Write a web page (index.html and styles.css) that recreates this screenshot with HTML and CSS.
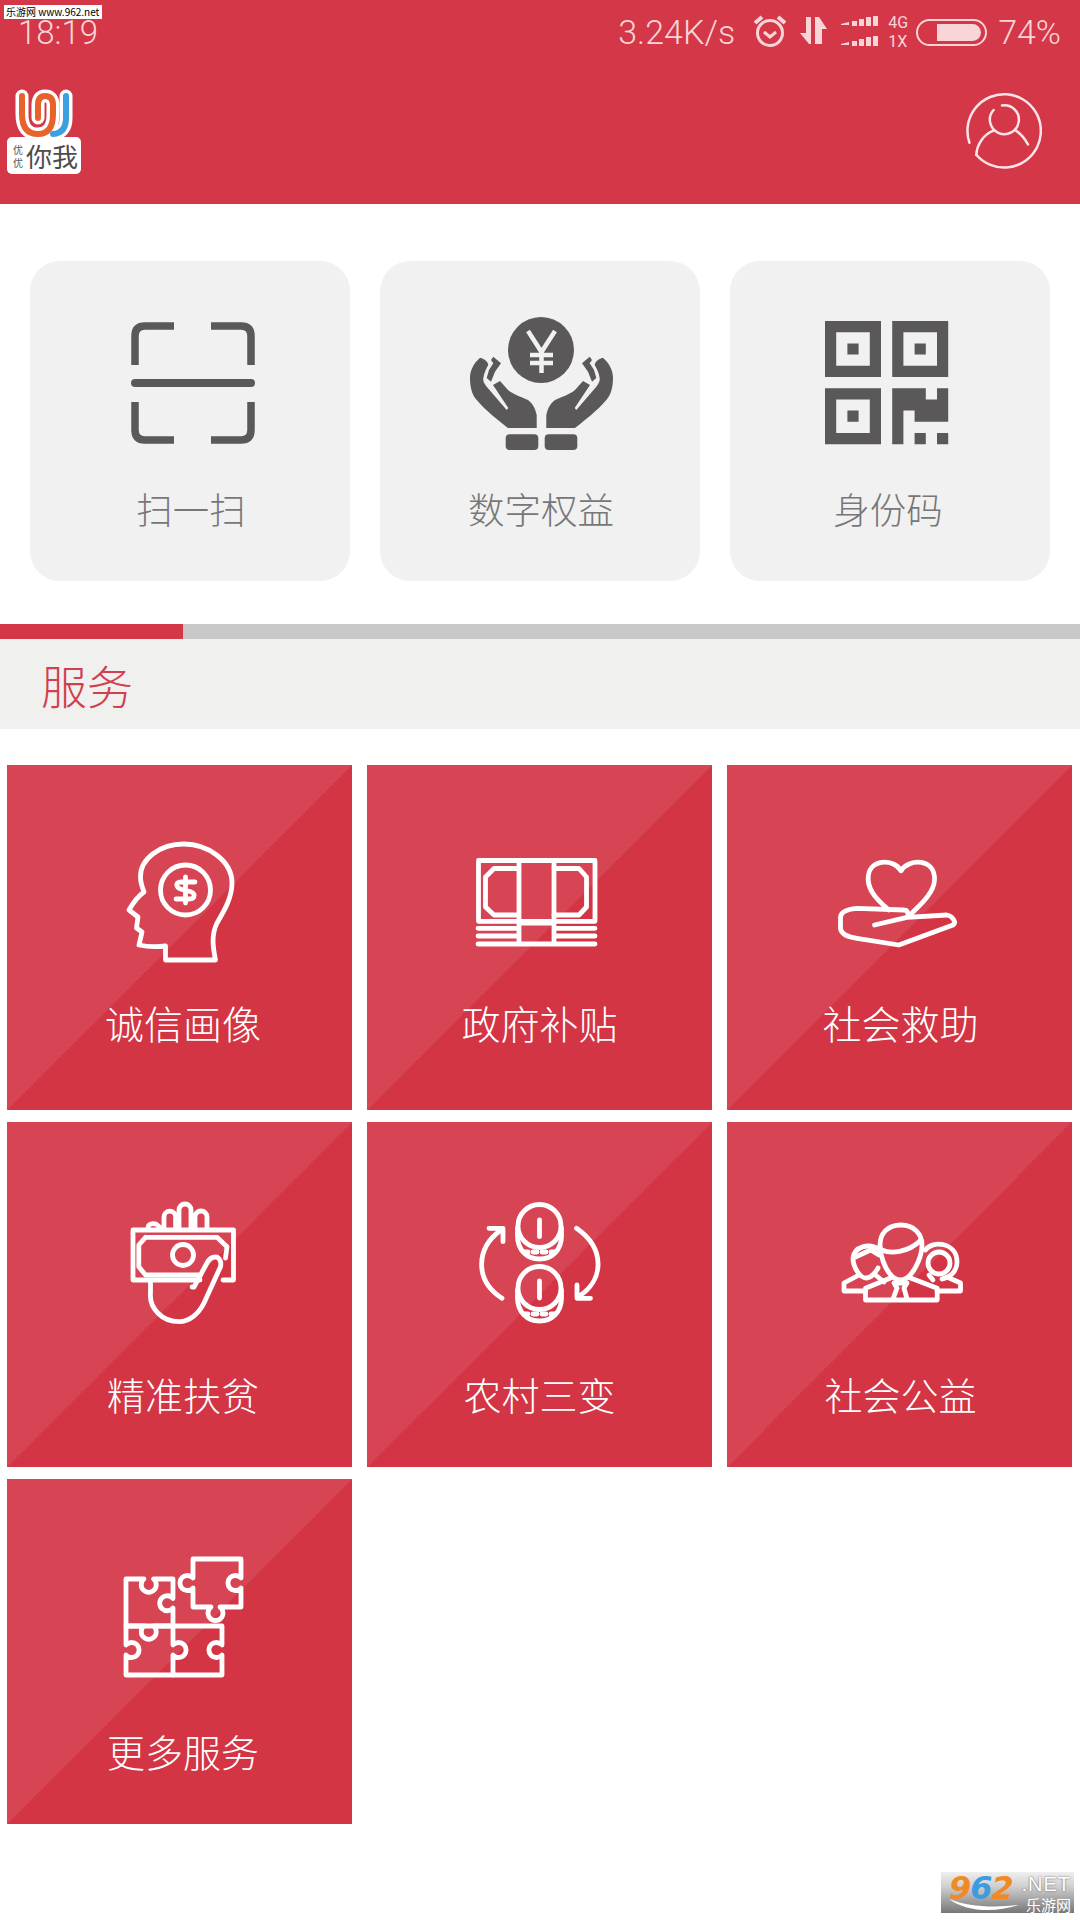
FILE: index.html
```html
<!DOCTYPE html>
<html lang="zh-CN">

<head>
    <meta charset="UTF-8">
    <meta name="viewport" content="width=device-width, initial-scale=1.0">
    <title>服务</title>
    <link rel="stylesheet" href="styles.css">
</head>

<body>
    <div class="site-mark">乐游网 www.962.net</div>

    <header class="header">
        <div class="status-bar">
            <span class="status-time">18:19</span>
            <div class="status-right">
                <span class="status-speed">3.24K/s</span>
                <svg class="status-alarm" viewBox="0 0 34 34">
                    <circle cx="17" cy="19" r="12.5" />
                    <path d="M11 18l6 5 6-5" />
                    <path d="M2 9l7-6M32 9l-7-6" class="status-ears" />
                </svg>
                <svg class="status-arrows" viewBox="0 0 27 28">
                    <path d="M0 16h6V0h5v27H9zM15 27V0h4l8 12h-5v15z" />
                </svg>
                <div class="status-signal">
                    <svg viewBox="0 0 38 11"><path d="M0 8l8-2v3H0zM11 5h5v5h-5zM18 3h5v7h-5zM25 1h5v9h-5zM32 0h5v10h-5z" /></svg>
                    <svg viewBox="0 0 38 11"><path d="M0 8l8-2v3H0zM11 5h5v5h-5zM18 3h5v7h-5zM25 1h5v9h-5zM32 0h5v10h-5z" /></svg>
                </div>
                <div class="status-net"><span>4G</span><span>1X</span></div>
                <div class="battery"><div class="battery-fill"></div></div>
                <span class="status-percent">74%</span>
            </div>
        </div>
        <div class="app-bar">
            <svg class="logo" viewBox="0 0 74 88">
                <rect x="0" y="51" width="74" height="37" rx="5" fill="#fff" />
                <g transform="translate(0 2)">
                    <g class="logo-halo">
                        <path d="M15 8v18q0 20 16 20q15 0 15-20v-9q0-9-8-9q-7 0-7 9v13" />
                        <path d="M59 8v22q0 15-13 16" />
                    </g>
                    <path class="logo-orange" d="M15 8v18q0 20 16 20q15 0 15-20v-9q0-9-8-9q-7 0-7 9v13" />
                    <path class="logo-blue" d="M59 8v22q0 15-13 16" />
                </g>
                <text class="logo-small" x="6" y="68">优</text>
                <text class="logo-small" x="6" y="81">优</text>
                <text class="logo-big" x="19" y="81">你我</text>
            </svg>
            <svg class="profile" viewBox="0 0 76 78">
                <path d="M3.400 50.700A36.700 36.700 0 1 1 10.300 62.800" />
                <path d="M27.600 18A14.500 14.500 0 1 0 36 13.400" />
                <path d="M27.600 38.600C18 42 11 52 10.300 62.800" />
                <path d="M50 38.600C55 42 59 47 62 52.400" />
            </svg>
        </div>
    </header>

    <section class="quick-row">
        <a class="quick-card">
            <svg class="quick-icon" viewBox="0 0 144 132">
                <g class="scan">
                    <path d="M56 9H27Q17 9 17 19V48" />
                    <path d="M93 9H123Q133 9 133 19V48" />
                    <path d="M17 85V113Q17 123 27 123H56" />
                    <path d="M133 85V113Q133 123 123 123H93" />
                    <path class="scan-line" d="M17 66H133" />
                </g>
            </svg>
            <span class="quick-label">扫一扫</span>
        </a>
        <a class="quick-card">
            <svg class="quick-icon" viewBox="-2 0 144 132">
                <circle class="dark" cx="71" cy="33" r="33" />
                <path class="yen" d="M58 14L71.500 35L85 14M71.500 35V56M60 38H83M60 46H83" />
                <g id="hand">
                    <path class="dark" d="M10 40.700C3 47 0 54 0 61C0 70 2 78 6.700 83C16 94 28 103 38 111H66.700V98C65 90 62 86 58 83C50 79 44 78 38 73L30 64L23 68L38.300 91L36.700 93L16.700 69.700C14 66 13 64 13.300 61.300C14 56 16 52 18.300 48C18 45 15 42 10 40.700Z" />
                    <path class="dark" d="M23.300 39.700L31 46.300L25 54.700L21 64.700L16.700 61L19 53L23.300 46.300L21 43Z" />
                    <rect class="dark" x="35.700" y="117.300" width="32.600" height="15.700" rx="4" />
                </g>
                <use href="#hand" transform="matrix(-1 0 0 1 143 0)" />
            </svg>
            <span class="quick-label">数字权益</span>
        </a>
        <a class="quick-card quick-card-last">
            <svg class="quick-icon" viewBox="0 0 144 132">
                <g class="dark qr" transform="translate(7 4) scale(11.2)">
                    <path fill-rule="evenodd" d="M0 0h5v5H0zM1 1v3h3V1zM2 2h1v1H2z" />
                    <path fill-rule="evenodd" d="M6 0h5v5H6zM7 1v3h3V1zM8 2h1v1H8z" />
                    <path fill-rule="evenodd" d="M0 6h5v5H0zM1 7v3h3V7zM2 8h1v1H2z" />
                    <path d="M6 6h3v1h1V6h1v3H8V8H7v3H6zM8 10h1v1H8zM10 10h1v1h-1z" />
                </g>
            </svg>
            <span class="quick-label">身份码</span>
        </a>
    </section>

    <div class="scroll-track"><div class="scroll-thumb"></div></div>

    <div class="section-title">服务</div>

    <section class="tile-grid">
        <a class="tile tile-first">
            <svg class="tile-icon" viewBox="-5 0 130 120">
                <path d="M45.500 117H95.500C93 105 91 92 97 80C104 68 112 55 112 40C112 18 88 1 64 1C40 1 20 16 20.500 34C20.500 39 22 44 24 49C17 54 13 60 9 67L18 74L16.500 85L22 89L19 102C28 104 37 104 45.500 103Z" />
                <circle cx="65.500" cy="47" r="25" />
                <path d="M75 39H61Q56 39 57 43Q58 46 66 47.500Q75 49 74 53Q74 56 69 56H56M65.500 34V60" />
            </svg>
            <span class="tile-label">诚信画像</span>
        </a>
        <a class="tile tile-first">
            <svg class="tile-icon" viewBox="-5 0 130 120">
                <path d="M-1.500 17.500H115V78.300H-1.500Z" />
                <path d="M39 17.500V100M74 17.500V100M39 80H74" />
                <path d="M37 25.500H14L5.500 34V64L14 72H37" />
                <path d="M74 25.500H99L106.500 34V64L99 72H74" />
                <path d="M-2 85.300H37M75.500 85.300H115M-2 93H37M75.500 93H115M-2 101H115" />
            </svg>
            <span class="tile-label">政府补贴</span>
        </a>
        <a class="tile tile-first">
            <svg class="tile-icon" viewBox="-5 0 130 120">
                <path d="M61 27.700C54 15 27 15 28.200 37C29 50 40 59 48.800 67" />
                <path d="M61 27.700C69 15 95.500 15 94.500 37C94 50 80 62 72 70" />
                <path d="M34.500 82L67 74.300C69 72 68 67 64 67L17 65.300C8 66 1 68 .5 74L.5 86C2 92 8 94 17 95.300L58.800 102L113 82C117 79 112 73 107 72L67 74.300" />
            </svg>
            <span class="tile-label">社会救助</span>
        </a>
        <a class="tile">
            <svg class="tile-icon" viewBox="-5 0 130 120">
                <path d="M103 80H113.500V30H13V80H80" />
                <path d="M25.500 37.300H97L107 46.700L105.500 58M80.500 75H25.500L18.800 66.700V45L25.500 37.300" />
                <circle cx="63" cy="55" r="10.500" />
                <path d="M44 28V17a5.800 5.800 0 0 1 11.600 0V28M59 28V10a6 6 0 0 1 12 0V28M75 28V17a6 6 0 0 1 12 0V28M28 28C28 24 32 23 36 24L41 28" />
                <path d="M30.500 81V93C29 108 42 121.700 59 121.700C70 121.700 79 113 84 103L100.500 66.700C102 60 98 57 95.500 57C91 57 89 59 87 63L74 87H72" />
            </svg>
            <span class="tile-label">精准扶贫</span>
        </a>
        <a class="tile">
            <svg class="tile-icon" viewBox="-5 0 130 120">
                <circle cx="59.500" cy="26" r="21.500" />
                <path d="M37.500 28V36C37.500 50 47 59 59.500 59C72 59 81.500 50 81.500 36V28" />
                <path d="M59.500 20V36.700M59.500 81V98" />
                <path class="dash" d="M44 52L75 52" />
                <circle cx="59.500" cy="88" r="21.500" />
                <path d="M37.500 90V98C37.500 112 47 121 59.500 121C72 121 81.500 112 81.500 98V90" />
                <path class="dash" d="M44 114L75 114" />
                <path d="M22 98.300C-6 80-4 48 21 30M9 28.300H23V41.700" />
                <path d="M96.500 28.300C125 48 125 80 98 97M97 85V98.300H110.500" />
            </svg>
            <span class="tile-label">农村三变</span>
        </a>
        <a class="tile">
            <svg class="tile-icon" viewBox="-5 0 130 120">
                <path d="M61 25C47 25 40 34 40 45C40 56 45 68 50 74C54 79 57 80 60.500 80C64 80 67 79 71 74C76 68 82 56 82 45C82 34 74 25 61 25Z" />
                <path d="M42 50C50 54 68 53 81 40" />
                <path d="M25.500 100V88.300L50.500 78M70.500 78L97.200 88.300V100H25.500" />
                <path d="M54 83H67L64 88L67 99M53 99L57 88L54 83" />
                <path d="M40 50C29 42 14 47 13 58C13 68 20.500 78 26 78C30.500 78 35.500 73 38 68" />
                <path d="M15.500 57L30.500 50L39 55" />
                <path d="M19 75L4 83V91H25.500M35.500 75L44 82" />
                <path d="M85.500 50C92 40 117 42 117 62C117 72 109 78 102 79" />
                <path d="M88 63a11 11 0 1 0 22 0a11 11 0 1 0-22 0" />
                <path d="M107 77L120.500 83V91H97M89 75L93 80" />
            </svg>
            <span class="tile-label">社会公益</span>
        </a>
        <a class="tile">
            <svg class="tile-icon" viewBox="-5 0 130 120">
                <path d="M73 2H121V21A7.500 7.500 0 1 0 121 31V50H100A7.500 7.500 0 1 1 91 50H73V31A7.500 7.500 0 1 1 73 21Z" />
                <path d="M6 22H24A7.500 7.500 0 1 0 33.500 22H53V41.500A7.500 7.500 0 1 0 53 51V69H6Z" />
                <path d="M6 69H24A7.500 7.500 0 1 0 33.500 69H53V88A7.500 7.500 0 1 1 53 98V118H6V98A7.500 7.500 0 1 0 6 88Z" />
                <path d="M53 69H102V88A7.500 7.500 0 1 0 102 98V118H53" />
            </svg>
            <span class="tile-label">更多服务</span>
        </a>
    </section>

    <div class="corner-mark">
        <span class="corner-num"><span class="num-orange">9</span><span class="num-blue">6</span><span class="num-orange">2</span></span>
        <svg class="corner-swoosh" viewBox="0 0 70 14"><path d="M0 0C20 8 45 9 70 6C45 14 18 13 0 0Z" /></svg>
        <div class="corner-side">
            <span class="corner-net">.NET</span>
            <span class="corner-name">乐游网</span>
        </div>
    </div>
</body>

</html>
```

FILE: styles.css
```css
* {
    margin: 0;
    padding: 0;
    box-sizing: border-box;
}

body {
    position: relative;
    width: 1080px;
    height: 1920px;
    overflow: hidden;
    background-color: #fff;
    font-family: "Noto Sans CJK SC", "Liberation Sans", sans-serif;
}

.site-mark {
    position: absolute;
    left: 4px;
    top: 5px;
    width: 98px;
    height: 14px;
    background-color: #fff;
    color: #000;
    font-size: 10px;
    line-height: 14px;
    padding-left: 2px;
    white-space: nowrap;
}

.header {
    height: 204px;
    background-color: #d43747;
}

.status-bar {
    display: flex;
    justify-content: space-between;
    align-items: center;
    height: 64px;
    padding: 0 19px 0 18px;
    color: #f9d5d8;
    font-family: Roboto, sans-serif;
    font-weight: 300;
    font-size: 33px;
}

.status-right {
    display: flex;
    align-items: center;
}

.status-speed,
.status-percent {
    font-size: 34px;
}

.status-alarm {
    width: 34px;
    height: 34px;
    margin: -3px 0 0 18px;
    fill: none;
    stroke: #f9d5d8;
    stroke-width: 3;
}

.status-alarm .status-ears {
    stroke-width: 4;
}

.status-arrows {
    width: 27px;
    height: 28px;
    margin: -3px 0 0 13px;
    fill: #f9d5d8;
}

.status-signal {
    display: flex;
    flex-direction: column;
    gap: 9px;
    width: 38px;
    margin: -2px 0 0 14px;
    fill: #f9d5d8;
}

.status-signal svg {
    display: block;
    width: 38px;
    height: 11px;
}

.status-net {
    display: flex;
    flex-direction: column;
    width: 24px;
    margin-left: 9px;
    font-size: 16px;
    line-height: 19px;
    font-weight: 400;
}

.battery {
    width: 71px;
    height: 27px;
    margin-left: 4px;
    padding: 3px 4px 3px 19px;
    border: 2px solid #f9d5d8;
    border-radius: 14px;
}

.battery-fill {
    height: 100%;
    background-color: #f9d5d8;
    border-radius: 0 9px 9px 0;
}

.status-percent {
    margin-left: 11px;
}

.app-bar {
    display: flex;
    justify-content: space-between;
    align-items: flex-start;
    padding: 22px 38px 0 7px;
}

.logo {
    width: 74px;
    height: 88px;
}

.logo-halo {
    fill: none;
    stroke: #fff;
    stroke-width: 13;
    stroke-linecap: round;
}

.logo-orange,
.logo-blue {
    fill: none;
    stroke-width: 6;
    stroke-linecap: round;
}

.logo-orange {
    stroke: #e8632c;
}

.logo-blue {
    stroke: #3aa0e0;
}

.logo-small {
    font-size: 10px;
    fill: #555;
}

.logo-big {
    font-size: 26px;
    fill: #4d4b4c;
}

.profile {
    width: 76px;
    height: 78px;
    margin-top: 6px;
    fill: none;
    stroke: #fbe4e6;
    stroke-width: 2.500;
    stroke-linecap: round;
}

.quick-row {
    display: flex;
    gap: 30px;
    padding: 57px 30px 43px;
}

.quick-card {
    display: flex;
    flex-direction: column;
    align-items: center;
    width: 320px;
    height: 320px;
    padding-top: 56px;
    background-color: #f1f1f1;
    border-radius: 30px;
}

.quick-icon {
    width: 144px;
    height: 132px;
    overflow: visible;
}

.quick-label {
    margin-top: 36px;
    padding-left: 2px;
    color: #777;
    font-size: 36.500px;
    font-weight: 300;
    line-height: 48px;
}

.quick-card-last .quick-label {
    padding: 0 4px 0 0;
}

.scan {
    fill: none;
    stroke: #5a5859;
    stroke-width: 7.500;
}

.scan .scan-line {
    stroke-width: 8;
    stroke-linecap: round;
}

.dark {
    fill: #5a5859;
}

.yen {
    fill: none;
    stroke: #f1f1f1;
    stroke-width: 4.500;
}

.scroll-track {
    height: 15px;
    background-color: #c9c9c9;
}

.scroll-thumb {
    width: 183px;
    height: 100%;
    background-color: #d43747;
}

.section-title {
    height: 90px;
    padding-left: 41px;
    background-color: #f0f0ef;
    color: #d23f4e;
    font-size: 46px;
    font-weight: 300;
    line-height: 90px;
}

.tile-grid {
    display: grid;
    grid-template-columns: repeat(3, 345px);
    gap: 12px 15px;
    padding: 36px 0 0 7px;
}

.tile {
    display: flex;
    flex-direction: column;
    align-items: center;
    height: 345px;
    padding-top: 78px;
    background: linear-gradient(135deg, #d74453 50%, #d33545 50%);
    color: #fff;
}

.tile-icon {
    flex: none;
    width: 130px;
    height: 120px;
    fill: none;
    stroke: #fff;
    stroke-width: 4.800;
    stroke-linecap: round;
    stroke-linejoin: round;
    overflow: visible;
}

.tile-icon .dash {
    stroke-dasharray: 4 5;
}

.tile-label {
    margin-top: 49px;
    font-size: 38px;
    font-weight: 300;
    line-height: 50px;
}

.tile-first .tile-label {
    margin-top: 34px;
    font-size: 39px;
}

.tile:nth-child(3n+1) .tile-label {
    padding-left: 7px;
}

.tile:nth-child(3n) .tile-label {
    padding-left: 2px;
}

.corner-mark {
    position: absolute;
    left: 941px;
    top: 1872px;
    display: flex;
    gap: 2px;
    width: 133px;
    height: 41px;
    padding: 0 3px 0 8px;
    background: linear-gradient(#efefef, #d0d0d0 35%, #777);
    white-space: nowrap;
}

.corner-num {
    font-family: "DejaVu Sans", sans-serif;
    font-size: 32px;
    font-style: italic;
    font-weight: 700;
    line-height: 32px;
    letter-spacing: -1px;
}

.corner-swoosh {
    position: absolute;
    left: 8px;
    top: 27px;
    width: 70px;
    height: 14px;
    fill: #fff;
}

.num-orange {
    color: #f08a24;
}

.num-blue {
    color: #3d9be0;
}

.corner-side {
    display: flex;
    flex-direction: column;
    align-items: flex-end;
    flex: 1;
    color: #fff;
}

.corner-net {
    font-family: "Liberation Sans", sans-serif;
    font-size: 20px;
    line-height: 24px;
    letter-spacing: 1px;
    text-shadow: 0 0 2px #555;
}

.corner-name {
    font-size: 15px;
    line-height: 17px;
}
```
